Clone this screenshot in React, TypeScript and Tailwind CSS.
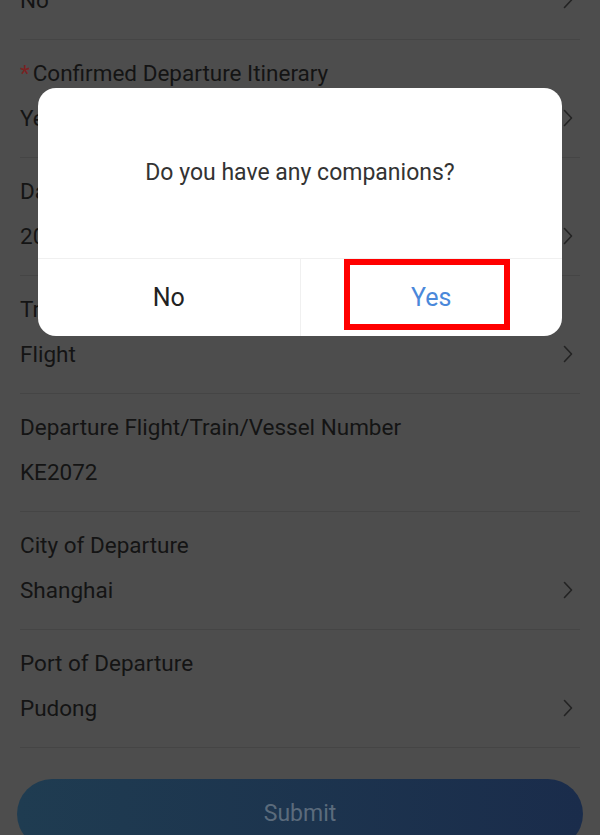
import { ReactNode } from 'react'

type Field = {
  label: ReactNode
  value: string
  arrow?: boolean
}

const fields: Field[] = [
  { label: 'Whether to Depart', value: 'No', arrow: true },
  {
    label: (
      <>
        <span className="text-[#7a2222] mr-[3px]">*</span>Confirmed Departure Itinerary
      </>
    ),
    value: 'Yes',
    arrow: true,
  },
  { label: 'Date of Departure', value: '2023-05-20', arrow: true },
  { label: 'Transportation', value: 'Flight', arrow: true },
  { label: 'Departure Flight/Train/Vessel Number', value: 'KE2072' },
  { label: 'City of Departure', value: 'Shanghai', arrow: true },
  { label: 'Port of Departure', value: 'Pudong', arrow: true },
]

function Chevron() {
  return (
    <svg width="12" height="20" viewBox="0 0 12 20" fill="none" className="shrink-0">
      <path d="M2.5 2.5 L9.5 10 L2.5 17.5" stroke="#232323" strokeWidth="1.6" strokeLinecap="round" strokeLinejoin="round" />
    </svg>
  )
}

function FieldRow({ field }: { field: Field }) {
  return (
    <div className="mx-5 pt-[21px] pb-[27px] border-b border-[#454545]">
      <div className="h-6 leading-6 text-[22.5px] text-[#141414] whitespace-nowrap">{field.label}</div>
      <div className="mt-[21px] h-6 flex items-center justify-between">
        <span className="leading-6 text-[22.5px] text-[#141414]">{field.value}</span>
        {field.arrow && (
          <span className="mr-[6px]">
            <Chevron />
          </span>
        )}
      </div>
    </div>
  )
}

function CompanionDialog() {
  return (
    <div className="absolute left-[38px] top-[88px] w-[524px] bg-white rounded-[18px] overflow-hidden">
      <div className="h-[170px] flex items-center justify-center text-[23px] text-[#333333]">
        Do you have any companions?
      </div>
      <div className="flex h-[78px] border-t border-[#f0f0f0]">
        <button className="flex-1 flex items-center justify-center text-[25px] text-[#222222] border-r border-[#f0f0f0]">
          No
        </button>
        <button className="relative flex-1 flex items-center justify-center text-[25px] text-[#4a88da]">
          Yes
          <span className="absolute left-[43px] top-0 w-[166px] h-[71px] border-[6px] border-[#ff0000]" />
        </button>
      </div>
    </div>
  )
}

export default function App() {
  return (
    <div className="relative w-[600px] h-[835px] overflow-hidden bg-[#4d4d4d]" style={{ fontFamily: 'Roboto, "Noto Sans", sans-serif' }}>
      <div className="-mt-[78px]">
        {fields.map((f, i) => (
          <FieldRow key={i} field={f} />
        ))}
        <div className="mx-[17px] mt-[31px] h-[70px] rounded-full bg-gradient-to-r from-[#1f3c51] to-[#1a2c4b] flex items-center justify-center text-[23px] text-[#5b6b7c]">
          Submit
        </div>
      </div>
      <CompanionDialog />
    </div>
  )
}
